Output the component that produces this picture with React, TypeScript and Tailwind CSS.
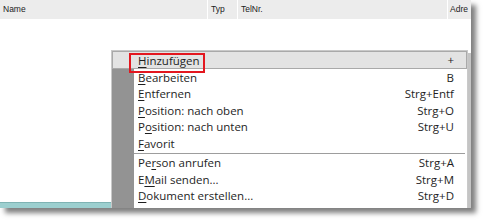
type Item = { label: string; hot: number; key: string };

const topItems: Item[] = [
  { label: "Hinzufügen", hot: 0, key: "+" },
  { label: "Bearbeiten", hot: 0, key: "B" },
  { label: "Entfernen", hot: 0, key: "Strg+Entf" },
  { label: "Position: nach oben", hot: 0, key: "Strg+O" },
  { label: "Position: nach unten", hot: 1, key: "Strg+U" },
  { label: "Favorit", hot: 0, key: "" },
];

const bottomItems: Item[] = [
  { label: "Person anrufen", hot: 2, key: "Strg+A" },
  { label: "EMail senden...", hot: 1, key: "Strg+M" },
  { label: "Dokument erstellen...", hot: 0, key: "Strg+D" },
];

function Label({ item }: { item: Item }) {
  const { label, hot } = item;
  return (
    <span>
      {label.slice(0, hot)}
      <span className="underline underline-offset-2">{label[hot]}</span>
      {label.slice(hot + 1)}
    </span>
  );
}

function Row({ item, active }: { item: Item; active?: boolean }) {
  if (active) {
    return (
      <div className="relative flex h-[18px] items-center border border-[#a9a9a9] bg-[#e3e3e3]">
        <div className="w-[25px] shrink-0" />
        <div className="flex-1 pt-px">
          <Label item={item} />
        </div>
        <div className="pr-[12px]">{item.key}</div>
        {/* annotation box */}
        <div className="absolute left-[16px] top-[1px] h-[20px] w-[76px] border-2 border-[#e3171f]" />
      </div>
    );
  }
  return (
    <div className="flex h-[16.5px] items-center">
      <div className="h-full w-[22px] shrink-0 bg-[#939393]" />
      <div className="flex-1 pl-[4px]">
        <Label item={item} />
      </div>
      <div className="pr-[13px]">{item.key}</div>
    </div>
  );
}

export default function App() {
  return (
    <div className="h-[222px] w-[483px] overflow-hidden bg-white">
      <div className="relative h-[208px] w-[471px] overflow-hidden bg-white shadow-[5px_5px_5px_rgba(0,0,0,0.5)]">
        <div className="flex h-full flex-col">
          {/* column header */}
          <div
            className="flex h-[19px] bg-[#ececec] text-[8.5px] text-[#222]"
            style={{ fontFamily: '"Liberation Sans", Tahoma, sans-serif' }}
          >
            <div className="flex w-[208px] items-center border-r border-white pl-[3px]">Name</div>
            <div className="flex w-[30px] items-center border-r border-white pl-[3px]">Typ</div>
            <div className="flex w-[210px] items-center border-r border-white pl-[3px]">TelNr.</div>
            <div className="flex flex-1 items-center pl-[2px]">Adre</div>
          </div>
          <div className="flex-1" />
          <div className="h-[6px] w-[111px] border-t border-[#7fb3b3] bg-[#9ccfcf]" />
        </div>

        {/* context menu */}
        <div
          className="absolute left-[111px] top-[50px] h-[160px] w-[357px] border border-[#c9c9c9] bg-white text-[11.5px] leading-none text-[#1e1e1e] shadow-[3px_3px_0_#c4c4c4]"
          style={{ fontFamily: '"Open Sans", "Segoe UI", sans-serif' }}
        >
          <Row item={topItems[0]} active />
          {topItems.slice(1).map((it) => (
            <Row key={it.label} item={it} />
          ))}
          <div className="flex h-[3.25px]">
            <div className="h-full w-[22px] bg-[#939393]" />
            <div className="mr-[2px] mt-[1px] h-px flex-1 bg-[#9d9d9d]" />
          </div>
          {bottomItems.map((it) => (
            <Row key={it.label} item={it} />
          ))}
          <div className="flex h-[6px]">
            <div className="h-full w-[22px] bg-[#939393]" />
          </div>
        </div>
      </div>
    </div>
  );
}
